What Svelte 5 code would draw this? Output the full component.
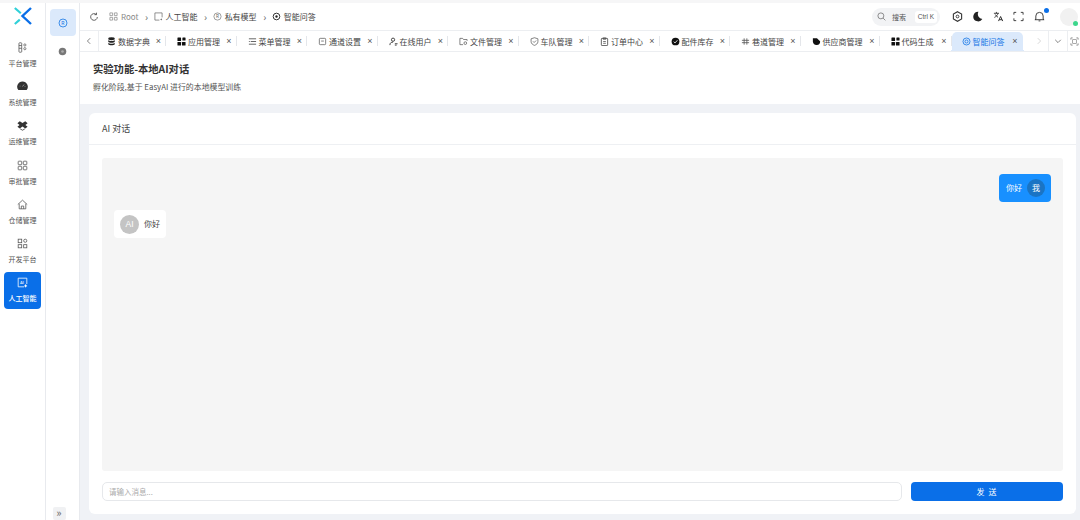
<script lang="ts">
  const rail = [
    { label: '平台管理', icon: 'platform' },
    { label: '系统管理', icon: 'gauge' },
    { label: '运维管理', icon: 'dropbox' },
    { label: '审批管理', icon: 'grid' },
    { label: '仓储管理', icon: 'home' },
    { label: '开发平台', icon: 'dev' },
    { label: '人工智能', icon: 'ai', active: true }
  ];

  const tabs = [
    { label: '数据字典', icon: 'db' },
    { label: '应用管理', icon: 'apps' },
    { label: '菜单管理', icon: 'menu' },
    { label: '通道设置', icon: 'square' },
    { label: '在线用户', icon: 'user' },
    { label: '文件管理', icon: 'folder' },
    { label: '车队管理', icon: 'shield' },
    { label: '订单中心', icon: 'clip' },
    { label: '配件库存', icon: 'check' },
    { label: '巷道管理', icon: 'hash' },
    { label: '供应商管理', icon: 'tag' },
    { label: '代码生成', icon: 'apps' },
    { label: '智能问答', icon: 'chat', active: true }
  ];
</script>

{#snippet tabIcon(name)}
  <svg class="tab-icon" viewBox="0 0 10 10" width="9" height="9">
    {#if name === 'db'}
      <ellipse cx="5" cy="2" rx="3.6" ry="1.6" fill="#222" />
      <path d="M1.4 3.4c1 1.4 6.2 1.4 7.2 0v1.8c-1 1.4-6.2 1.4-7.2 0zM1.4 6.4c1 1.4 6.2 1.4 7.2 0v1.6c-1 1.6-6.2 1.6-7.2 0z" fill="#222" />
    {:else if name === 'apps'}
      <rect x="0.5" y="0.5" width="4" height="4" rx="0.6" fill="#111" />
      <rect x="6" y="0.5" width="3.5" height="3.5" rx="0.6" fill="#111" />
      <rect x="0.5" y="5.5" width="4" height="4" rx="0.6" fill="#111" />
      <rect x="5.5" y="5.5" width="4" height="4" rx="0.6" fill="#111" />
    {:else if name === 'menu'}
      <path d="M1 2h8M3 5h6M1 8h8M1 5h1" stroke="#444" stroke-width="0.9" fill="none" />
    {:else if name === 'square'}
      <rect x="1.5" y="1.5" width="7" height="7" rx="1" stroke="#555" stroke-width="0.8" fill="none" />
      <path d="M3.5 4.5h3" stroke="#555" stroke-width="0.8" />
    {:else if name === 'user'}
      <circle cx="4.5" cy="3" r="1.8" stroke="#333" stroke-width="1" fill="none" />
      <path d="M1 9c0-2.5 1.5-3.3 3.5-3.3M6.5 7.5h3M6.5 9h2" stroke="#333" stroke-width="1" fill="none" />
    {:else if name === 'folder'}
      <path d="M1 8.5v-7h3l1 1.3h4v1.5M1 8.5h3.5" stroke="#555" stroke-width="0.8" fill="none" />
      <circle cx="7" cy="6.8" r="1.5" stroke="#555" stroke-width="0.8" fill="none" />
    {:else if name === 'shield'}
      <path d="M5 0.8l3.8 1.2v3c0 2.3-1.8 3.6-3.8 4.3-2-.7-3.8-2-3.8-4.3v-3z" stroke="#555" stroke-width="0.8" fill="none" />
      <path d="M3.3 4.8l1.3 1.3 2.2-2.2" stroke="#555" stroke-width="0.8" fill="none" />
    {:else if name === 'clip'}
      <rect x="1.5" y="1.5" width="7" height="8" rx="0.8" stroke="#444" stroke-width="0.9" fill="none" />
      <path d="M3.5 1h3v1.5h-3zM3.5 5h3M3.5 7h3" stroke="#444" stroke-width="0.8" fill="none" />
    {:else if name === 'check'}
      <circle cx="5" cy="5" r="4.3" fill="#111" />
      <path d="M3 5.2l1.5 1.4 2.6-3" stroke="#fff" stroke-width="0.9" fill="none" />
    {:else if name === 'hash'}
      <path d="M1 3.7h8M1 6.3h8M3.5 1.5v7M6.5 1.5v7" stroke="#555" stroke-width="0.9" fill="none" />
    {:else if name === 'tag'}
      <path d="M1 1.5h4.5l3.5 3.2c.3 2.5-1.5 4.5-4 4.3-2.500-.2-4-2-4-4z" fill="#111" />
    {:else if name === 'chat'}
      <circle cx="5" cy="5" r="3.9" stroke="#1677e6" stroke-width="0.9" fill="none" />
      <circle cx="5" cy="5" r="1.7" stroke="#1677e6" stroke-width="0.9" fill="none" />
    {/if}
  </svg>
{/snippet}

{#snippet railIcon(name)}
  <svg viewBox="0 0 14 14" width="11" height="11">
    {#if name === 'platform'}
      <rect x="2.5" y="1" width="3.5" height="12" rx="0.8" stroke="#555" fill="none" />
      <path d="M2.5 4.5h3.5M2.5 8h3.5" stroke="#555" />
      <circle cx="10" cy="3.8" r="1.4" stroke="#666" fill="none" />
      <circle cx="10" cy="8.5" r="1.4" stroke="#666" fill="none" />
    {:else if name === 'gauge'}
      <path d="M7 .5a6.8 6.8 0 0 1 5.3 11H1.7A6.8 6.8 0 0 1 7 .5z" fill="#333" />
      <path d="M7 7l2-2.5M3.5 6.5h.8M9.800 7h.8" stroke="#ccc" stroke-width="0.8" />
    {:else if name === 'dropbox'}
      <path d="M3.5 1.5L7 3.8l3.5-2.300L13.500 4l-2.800 2.300 2.800 2.200-3 2.200L7 8.300l-3.500 2.400-3-2.200 2.800-2.200L.5 4z" fill="#333" />
      <path d="M4 11.300l3 1.700 3-1.700" stroke="#333" fill="none" />
    {:else if name === 'grid'}
      <rect x="1.5" y="1.5" width="4.5" height="4.5" rx="0.8" stroke="#555" fill="none" />
      <rect x="8" y="1.5" width="4.5" height="4.5" rx="0.8" stroke="#555" fill="none" />
      <rect x="1.5" y="8" width="4.5" height="4.5" rx="0.8" stroke="#555" fill="none" />
      <rect x="8" y="8" width="4.5" height="4.5" rx="0.8" stroke="#555" fill="none" />
    {:else if name === 'home'}
      <path d="M1 7l6-5.5L13 7M2.8 6v6.5h8.4V6M5.5 12.5V9h3v3.5" stroke="#555" fill="none" />
    {:else if name === 'dev'}
      <rect x="1.5" y="1.5" width="4.5" height="4.5" stroke="#555" fill="none" />
      <rect x="8.5" y="1.5" width="4" height="4" rx="2" stroke="#555" fill="none" />
      <rect x="1.5" y="8.5" width="4.5" height="4" stroke="#555" fill="none" />
      <rect x="8.5" y="8.5" width="4" height="4" stroke="#555" fill="none" />
    {:else if name === 'ai'}
      <path d="M9 12.5H1.5v-11h11V9" stroke="#fff" fill="none" />
      <text x="3.8" y="8.5" font-size="5" fill="#fff" font-family="Inter, sans-serif">AI</text>
      <path d="M11 9l.8 1.5 1.5.8-1.5.8-.8 1.5-.8-1.5-1.5-.8 1.500-.8z" fill="#fff" />
    {/if}
  </svg>
{/snippet}

<div class="shell">
  <aside class="rail">
    <div class="logo">
      <svg viewBox="0 0 18 18" width="18" height="18">
        <path d="M.8 1l6 5.3" stroke="#2fd0d8" stroke-width="2.2" fill="none" />
        <path d="M.8 17l5-4.3" stroke="#2fd0d8" stroke-width="2.2" fill="none" />
        <path d="M17 1L8.5 9l8.5 8" stroke="#0a6fe8" stroke-width="2.4" fill="none" />
      </svg>
    </div>
    {#each rail as item}
      <div class="rail-item" class:active={item.active}>
        {@render railIcon(item.icon)}
        <span>{item.label}</span>
      </div>
    {/each}
  </aside>

  <nav class="subnav">
    <div class="sub-active">
      <svg viewBox="0 0 10 10" width="10" height="10">
        <circle cx="5" cy="5" r="4" stroke="#1677e6" stroke-width="0.8" fill="none" />
        <text x="3.3" y="7" font-size="5" fill="#1677e6" font-family="Inter, sans-serif">R</text>
      </svg>
    </div>
    <div class="sub-item">
      <svg viewBox="0 0 10 10" width="9" height="9">
        <circle cx="5" cy="5" r="4.2" fill="#777" />
        <circle cx="5" cy="5" r="1.5" fill="#aaa" />
      </svg>
    </div>
    <div class="collapse">»</div>
  </nav>

  <div class="main">
    <header class="topbar">
      <svg class="refresh" viewBox="0 0 12 12" width="10" height="10">
        <path d="M10 6a4 4 0 1 1-1.3-3M9 .8v2.4H6.6" stroke="#444" fill="none" />
      </svg>
      <div class="crumbs">
        <span class="crumb muted">
          <svg viewBox="0 0 10 10" width="9" height="9"><path d="M1 1h3v3H1zM6 1h3v3H6zM1 6h3v3H1zM6 6h3v3H6z" stroke="#888" stroke-width="0.8" fill="none" /></svg>
          Root
        </span>
        <i>›</i>
        <span class="crumb">
          <svg viewBox="0 0 10 10" width="9" height="9"><path d="M6 9H1V1h8v5" stroke="#555" stroke-width="0.7" fill="none" /><path d="M8 7l.4.8.8.4-.8.4-.4.8-.4-.8-.8-.4.8-.4z" fill="#555" /></svg>
          人工智能
        </span>
        <i>›</i>
        <span class="crumb">
          <svg viewBox="0 0 10 10" width="9" height="9"><circle cx="5" cy="5" r="4" stroke="#666" stroke-width="0.7" fill="none" /><text x="3.3" y="7" font-size="5" fill="#666" font-family="Inter, sans-serif">R</text></svg>
          私有模型
        </span>
        <i>›</i>
        <span class="crumb">
          <svg viewBox="0 0 10 10" width="9" height="9"><circle cx="5" cy="5" r="3.7" stroke="#222" stroke-width="1" fill="none" /><circle cx="5" cy="5" r="1.3" fill="#222" /></svg>
          智能问答
        </span>
      </div>
      <div class="tools">
        <div class="search">
          <svg viewBox="0 0 10 10" width="9" height="9"><circle cx="4.3" cy="4.3" r="3.3" stroke="#666" stroke-width="0.8" fill="none" /><path d="M6.8 6.8L9.3 9.3" stroke="#666" stroke-width="0.8" /></svg>
          <span class="search-label">搜索</span>
          <span class="kbd">Ctrl K</span>
        </div>
        <svg viewBox="0 0 12 12" width="11" height="11"><path d="M6 .8l4.5 2.600v5.200L6 11.200 1.500 8.600V3.400z" stroke="#333" stroke-width="1.2" fill="none" /><circle cx="6" cy="6" r="1.5" stroke="#333" fill="none" /></svg>
        <svg viewBox="0 0 12 12" width="11" height="11"><path d="M7 .8a5.3 5.3 0 1 0 4.3 8A5.5 5.5 0 0 1 7 .8z" fill="#222" /></svg>
        <svg viewBox="0 0 12 12" width="11" height="11"><path d="M1 2.5h5.5M3.7 1v1.5M5.5 2.5C5 4.500 3.500 6 1.500 7M2.500 3.800c.7 1.500 1.800 2.500 3 3" stroke="#333" fill="none" /><path d="M6 11l2.300-5 2.300 5M6.800 9.500h3" stroke="#222" fill="none" /></svg>
        <svg viewBox="0 0 12 12" width="11" height="11"><path d="M1 4V1.500h2.500M8.500 1.500H11V4M11 8v2.500H8.500M3.500 10.500H1V8" stroke="#333" fill="none" /></svg>
        <div class="bell">
          <svg viewBox="0 0 12 12" width="11" height="11"><path d="M2 9V5.500a4 4 0 0 1 8 0V9l1 .5H1zM5 10.800h2" stroke="#333" fill="none" /></svg>
          <span class="bell-dot"></span>
        </div>
        <div class="avatar"><span class="online"></span></div>
      </div>
    </header>

    <div class="tabbar">
      <div class="tab-arrow left">
        <svg viewBox="0 0 10 10" width="8" height="8"><path d="M6.5 1.5L3 5l3.500 3.500" stroke="#666" fill="none" /></svg>
      </div>
      <div class="tabs">
        {#each tabs as tab}
          <div class="tab" class:active={tab.active}>
            {@render tabIcon(tab.icon)}
            <span>{tab.label}</span>
            <b>×</b>
          </div>
        {/each}
      </div>
      <div class="tab-arrow next">
        <svg viewBox="0 0 10 10" width="8" height="8"><path d="M3.5 1.5L7 5 3.500 8.500" stroke="#ccc" fill="none" /></svg>
      </div>
      <div class="tab-arrow ctl">
        <svg viewBox="0 0 10 10" width="8" height="8"><path d="M1.5 3.5L5 7l3.500-3.500" stroke="#666" fill="none" /></svg>
      </div>
      <div class="tab-arrow ctl last">
        <svg viewBox="0 0 10 10" width="9" height="9"><path d="M1 3V1h2M7 1h2v2M9 7v2H7M3 9H1V7" stroke="#777" stroke-width="0.8" fill="none" /><rect x="3" y="3" width="4" height="4" stroke="#777" stroke-width="0.7" fill="none" /></svg>
      </div>
    </div>

    <section class="page-head">
      <h1>实验功能-本地AI对话</h1>
      <p>孵化阶段,基于 EasyAI 进行的本地模型训练</p>
    </section>

    <div class="content">
      <div class="card">
        <div class="card-title">AI 对话</div>
        <div class="card-body">
          <div class="messages">
            <div class="row right">
              <div class="bubble mine">
                <span>你好</span>
                <span class="who me">我</span>
              </div>
            </div>
            <div class="row">
              <div class="bubble theirs">
                <span class="who ai">AI</span>
                <span>你好</span>
              </div>
            </div>
          </div>
          <div class="composer">
            <input type="text" placeholder="请输入消息..." />
            <button>发 送</button>
          </div>
        </div>
      </div>
    </div>
  </div>
</div>

<style>
  :global(body) {
    margin: 0;
    background: #fff;
    font-family: "Noto Sans CJK SC", "Liberation Sans", sans-serif;
    color: #333;
  }

  .shell { display: flex; width: 1080px; height: 520px; overflow: hidden; box-sizing: border-box; padding-top: 3px; background: #fff; position: relative; }
  .shell::before { content: ''; position: absolute; inset: 0 0 auto 0; height: 3px; background: #f6f6f7; }

  .rail { width: 45px; flex: none; border-right: 1px solid #e8eaee; display: flex; flex-direction: column; align-items: center; }
  .logo { height: 33.5px; box-sizing: border-box; display: flex; align-items: flex-start; padding-top: 4px; flex: none; }
  .rail-item { width: 37px; height: 37px; flex: none; margin-bottom: 2.2px; display: flex; flex-direction: column; align-items: center; justify-content: center; gap: 6px; font-size: 7px; line-height: 9px; color: #555; border-radius: 4px; }
  .rail-item svg { flex: none; }
  .rail-item.active { background: #0a6fe8; color: #fff; font-weight: 500; }

  .subnav { width: 34px; flex: none; border-right: 1px solid #e8eaee; display: flex; flex-direction: column; align-items: center; padding-top: 6px; box-sizing: border-box; }
  .sub-active { width: 26px; height: 27px; background: #dbe9fb; border-radius: 4px; display: flex; align-items: center; justify-content: center; }
  .sub-item { height: 30px; display: flex; align-items: center; justify-content: center; }
  .collapse { margin-top: auto; margin-right: 7px; width: 13px; height: 13px; background: #f0f1f3; border-radius: 2px; font-size: 11px; line-height: 11px; text-align: center; color: #666; }

  .main { flex: 1; min-width: 0; display: flex; flex-direction: column; }

  .topbar { height: 27px; flex: none; display: flex; align-items: center; padding: 0 6px 0 9px; box-sizing: border-box; }
  .refresh { margin-right: 10px; }
  .crumbs { display: flex; align-items: center; font-size: 8px; color: #444; }
  .crumbs i { font-style: normal; font-size: 10px; color: #666; margin: 0 5.5px 0 6.5px; line-height: 10px; }
  .crumb { display: flex; align-items: center; gap: 3px; }
  .crumb.muted { color: #888; }
  .tools { margin-left: auto; display: flex; align-items: center; gap: 9.5px; }
  .search { width: 68px; height: 18px; border-radius: 9px; background: #f2f3f5; display: flex; align-items: center; padding: 0 3px 0 5px; box-sizing: border-box; font-size: 7px; color: #555; margin-right: 2px; }
  .search-label { margin-left: 6px; }
  .kbd { margin-left: auto; background: #fff; border-radius: 3px; padding: 0 3px; line-height: 12px; font-size: 6.5px; font-family: "Liberation Sans", sans-serif; color: #555; }
  .bell { position: relative; display: flex; }
  .bell-dot { position: absolute; right: -4px; top: -3px; width: 5px; height: 5px; background: #0a6fe8; border-radius: 50%; }
  .avatar { position: relative; width: 18px; height: 18px; border-radius: 50%; background: #f1f1f1; margin-left: 6px; margin-right: -4px; }
  .online { position: absolute; right: 0; bottom: 0; width: 5px; height: 5px; border-radius: 50%; background: #3dd68c; }

  .tabbar { height: 22px; flex: none; display: flex; align-items: stretch; border-top: 1px solid #eceef1; border-bottom: 1px solid #eceef1; box-sizing: border-box; font-size: 8px; color: #444; }
  .tab-arrow { width: 19px; flex: none; display: flex; align-items: center; justify-content: center; border-right: 1px solid #eceef1; box-sizing: border-box; }
  .tab-arrow.next { width: 26px; padding-left: 8px; }
  .tab-arrow.last { border-right: none; width: 13px; }
  .tabs { display: flex; flex: none; }
  .tab { width: 70.5px; box-sizing: border-box; display: flex; align-items: center; position: relative; white-space: nowrap; padding: 0 5px 0 11px; }
  .tab::after { content: ''; position: absolute; right: 0; top: 5px; bottom: 5px; width: 1px; background: #e4e6ea; }
  .tab:first-child { width: 67px; padding-left: 8px; }
  .tab:nth-child(11) { width: 79px; }
  .tab:nth-child(12) { width: 72px; }
  .tab.active { width: 71px; margin-top: 1px; background: #dbe9fb; color: #1677e6; border-radius: 5px 5px 0 0; padding-left: 10px; }
  .tab.active::before, .tab.active::after { content: ''; position: absolute; top: auto; bottom: 0; width: 3px; height: 3px; background: radial-gradient(circle at 0 0, transparent 3px, #dbe9fb 3px); }
  .tab.active::before { left: -3px; }
  .tab.active::after { right: -3px; background: radial-gradient(circle at 100% 0, transparent 3px, #dbe9fb 3px); }
  .tab-icon { flex: none; margin-right: 2px; }
  .tab b { font-weight: 400; font-size: 9px; color: #555; margin-left: auto; line-height: 9px; font-family: "Liberation Sans", sans-serif; }

  .page-head { height: 52px; flex: none; padding: 9px 13px 0; box-sizing: border-box; background: #fff; }
  h1 { margin: 0; font-size: 10.3px; line-height: 16px; font-weight: 700; color: #333; }
  p { margin: 4px 0 0; font-size: 7.9px; line-height: 12px; color: #555; }

  .content { flex: 1; min-height: 0; background: #f0f2f6; padding: 9px 4px 6px 9px; display: flex; }
  .card { flex: 1; background: #fff; border-radius: 6px; display: flex; flex-direction: column; min-width: 0; }
  .card-title { height: 31px; flex: none; border-bottom: 1px solid #eef0f3; padding: 0 13px; font-size: 9px; line-height: 31px; color: #444; }
  .card-body { flex: 1; display: flex; flex-direction: column; padding: 13px 13px 13.5px; min-height: 0; }

  .messages { flex: 1; background: #f5f5f5; border-radius: 3px; padding: 16px 12px; display: flex; flex-direction: column; gap: 8px; }
  .row { display: flex; }
  .row.right { justify-content: flex-end; }
  .bubble { display: flex; align-items: center; gap: 5px; padding: 5px 6px; border-radius: 4px; font-size: 8px; line-height: 18px; }
  .mine { background: #1890ff; color: #fff; padding: 5px 6px 5px 7px; }
  .theirs { background: #fff; color: #444; padding: 4.5px 6px; }
  .who { width: 18px; height: 18px; border-radius: 50%; text-align: center; line-height: 18px; flex: none; }
  .me { background: #1a74c4; color: #fff; }
  .ai { width: 19px; height: 19px; line-height: 19px; background: #c4c4c4; color: #fff; font-family: "Liberation Sans", sans-serif; font-size: 8.5px; }

  .composer { flex: none; display: flex; gap: 9px; margin-top: 11px; }
  input { flex: 1; min-width: 0; height: 18.5px; box-sizing: border-box; border: 1px solid #e6e8eb; border-radius: 5px; padding: 0 6px; font-size: 7.5px; background: #fff; font-family: inherit; outline: none; }
  input::placeholder { color: #aaa; }
  button { width: 152px; flex: none; height: 18.5px; border: none; border-radius: 4px; background: #0a6fe8; color: #fff; font-size: 8px; letter-spacing: 1px; font-family: inherit; padding: 0; }
</style>
